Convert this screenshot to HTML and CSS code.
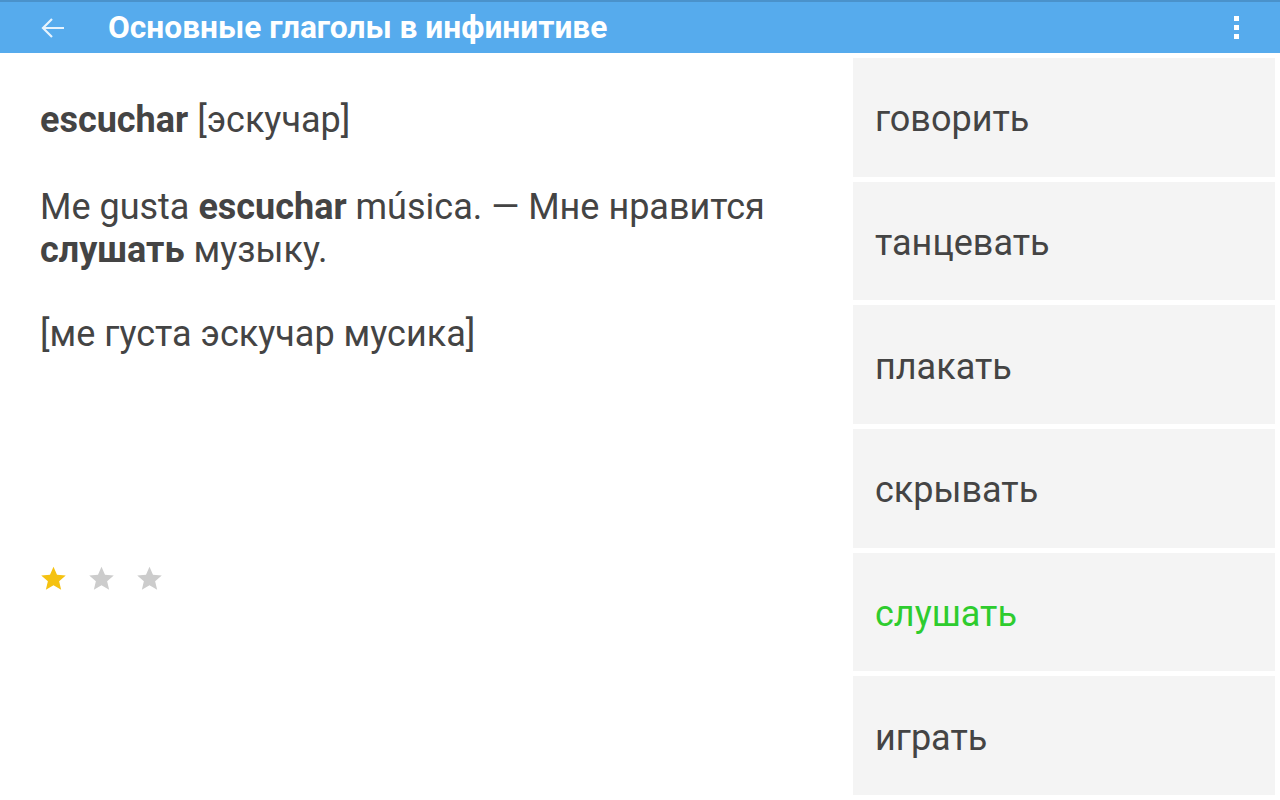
FILE: index.html
```html
<!DOCTYPE html>
<html lang="ru">
<head>
<meta charset="utf-8">
<link rel="stylesheet" href="styles.css">
</head>
<body>
<header class="appbar">
  <div class="back">
    <svg width="26" height="24" viewBox="0 0 26 24"><path d="M24 12H3M12 3L3 12l9 9" fill="none" stroke="#ffffff" stroke-opacity="0.85" stroke-width="2.2"/></svg>
  </div>
  <h1 class="title">Основные глаголы в инфинитиве</h1>
  <div class="menu"><span></span><span></span><span></span></div>
</header>
<main class="content">
  <section class="card">
    <p class="word"><b>escuchar</b> [эскучар]</p>
    <p class="example">Me gusta <b>escuchar</b> música. — Мне нравится <b>слушать</b> музыку.</p>
    <p class="translit">[ме густа эскучар мусика]</p>
    <div class="stars">
      <svg class="star on" viewBox="0 0 24 24"><path d="M12 1.5l3.1 7.2 7.8.7-5.9 5.1 1.8 7.6L12 18.1l-6.8 4 1.8-7.6-5.9-5.1 7.8-.7z"/></svg>
      <svg class="star" viewBox="0 0 24 24"><path d="M12 1.5l3.1 7.2 7.8.7-5.9 5.1 1.8 7.6L12 18.1l-6.8 4 1.8-7.6-5.9-5.1 7.8-.7z"/></svg>
      <svg class="star" viewBox="0 0 24 24"><path d="M12 1.5l3.1 7.2 7.8.7-5.9 5.1 1.8 7.6L12 18.1l-6.8 4 1.8-7.6-5.9-5.1 7.8-.7z"/></svg>
    </div>
  </section>
  <section class="answers">
    <div class="answer">говорить</div>
    <div class="answer">танцевать</div>
    <div class="answer">плакать</div>
    <div class="answer">скрывать</div>
    <div class="answer correct">слушать</div>
    <div class="answer">играть</div>
  </section>
</main>
</body>
</html>
```
FILE: styles.css
```css
html, body {
  margin: 0;
  padding: 0;
  width: 1280px;
  height: 800px;
  overflow: hidden;
  background: #ffffff;
  font-family: Roboto, "Noto Sans", sans-serif;
  color: #444444;
}
.appbar {
  height: 51px;
  background: #56abed;
  border-top: 2px solid #4a92cb;
  display: flex;
  align-items: center;
  box-sizing: content-box;
}
.back {
  width: 26px;
  height: 24px;
  margin-left: 40px;
  display: flex;
}
.title {
  margin: 0 0 0 42px;
  font-size: 31.7px;
  font-weight: 700;
  color: #ffffff;
  flex: 1;
  letter-spacing: 0;
}
.menu {
  display: flex;
  flex-direction: column;
  gap: 4px;
  margin-right: 41px;
}
.menu span {
  width: 5px;
  height: 5px;
  background: #ffffff;
}
.content {
  display: flex;
  height: 747px;
}
.card {
  flex: 1;
  padding: 0 0 0 40px;
}
.card p {
  margin: 0;
  font-size: 36px;
  line-height: 43px;
}
.card b {
  font-weight: 700;
}
.word {
  padding-top: 46px;
}
.example {
  padding-top: 44px;
  width: 760px;
}
.translit {
  padding-top: 41px;
}
.stars {
  display: flex;
  gap: 21px;
  margin-top: 209px;
}
.star {
  width: 27px;
  height: 27px;
  fill: #cccccc;
}
.star.on {
  fill: #f5c211;
}
.answers {
  width: 422px;
  margin-right: 5px;
  padding: 5px 0;
  display: flex;
  flex-direction: column;
  gap: 5px;
  box-sizing: border-box;
}
.answer {
  flex: 1;
  background: #f4f4f4;
  display: flex;
  align-items: center;
  padding: 4px 0 0 22px;
  font-size: 36px;
  color: #444444;
}
.answer.correct {
  color: #2ecc2e;
}
```
